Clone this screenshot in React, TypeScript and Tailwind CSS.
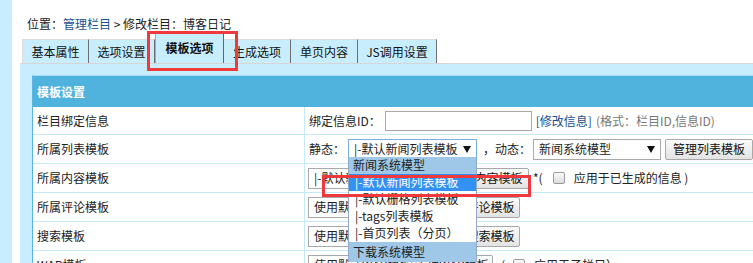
import React from "react";

const Tri = () => (
  <svg width="8" height="7" viewBox="0 0 8 7">
    <path d="M0 0H8L4 7Z" fill="#111" />
  </svg>
);

function Sel({ className = "", text, focus = false }: { className?: string; text: string; focus?: boolean }) {
  return (
    <div
      className={`h-[21px] shrink-0 flex items-center justify-between pl-[5px] pr-[5px] bg-white border overflow-hidden whitespace-nowrap ${
        focus ? "border-[#7aaee6]" : "border-[#a9a9a9]"
      } ${className}`}
    >
      <span>{text}</span>
      <Tri />
    </div>
  );
}

function Btn({ className = "", children }: { className?: string; children: React.ReactNode }) {
  return (
    <div
      className={`h-[21px] shrink-0 flex items-center justify-center border border-[#a9a9a9] rounded-[2px] bg-gradient-to-b from-[#fbfbfb] to-[#e3e3e3] text-[#111] whitespace-nowrap ${className}`}
    >
      {children}
    </div>
  );
}

const Check = () => (
  <span className="inline-block w-[12px] h-[12px] border border-[#9a9a9a] rounded-[2px] bg-gradient-to-b from-[#fafafa] to-[#dcdcdc]" />
);

function Row({ label, h = "h-[29px]", children }: { label: string; h?: string; children?: React.ReactNode }) {
  return (
    <div className={`flex ${h} border-b border-[#c6e9f8] bg-white`}>
      <div className="w-[272px] shrink-0 border-r border-[#c6e9f8] pl-[4px] flex items-center text-[#222]">{label}</div>
      <div className="flex items-center pl-[3px] whitespace-nowrap">{children}</div>
    </div>
  );
}

const tabs = ["基本属性", "选项设置", "模板选项", "生成选项", "单页内容", "JS调用设置"];
const tabW = ["w-[67px]", "w-[66px]", "w-[69px]", "w-[67px]", "w-[67px]", "w-[79px]"];

export default function App() {
  return (
    <div className="relative w-[753px] h-[263px] overflow-hidden bg-white flex text-[12px] text-[#222] font-['Noto_Sans_CJK_SC',sans-serif]">
      <div className="w-[12px] shrink-0 bg-[#c8eefd]" />
      <div className="w-[8px] shrink-0" />
      <div className="flex-1 flex flex-col min-w-0">
        {/* breadcrumb */}
        <div className="h-[33px] pl-[7px] pt-[15px] leading-[18px] whitespace-nowrap">
          位置：<span className="text-[#1b4f8e]">管理栏目</span> &gt; 修改栏目：博客日记
        </div>

        {/* tabs */}
        <div className="h-[30px] flex items-end pl-[2px]">
          {tabs.map((t, i) =>
            i === 2 ? (
              <div
                key={t}
                className={`${tabW[i]} h-[30px] shrink-0 bg-[#c8eefd] border-l border-[#aaa] border-r border-r-[#666] flex items-center justify-center pb-[1px] font-bold text-[#111]`}
              >
                {t}
              </div>
            ) : (
              <div
                key={t}
                className={`${tabW[i]} h-[24px] shrink-0 bg-[#c8eefd] border-t border-t-[#dcdcdc] border-r border-r-[#6f6f6f] ${
                  i === 0 ? "border-l border-l-[#dcdcdc]" : ""
                } flex items-center justify-center pt-[1px] text-[#111]`}
              >
                {t}
              </div>
            )
          )}
        </div>

        {/* panel */}
        <div className="flex-1 bg-[#c8eefd] border-t border-[#d6d6d6] pl-[12px] pt-[11px] overflow-hidden">
          <div className="w-[760px] border-l border-[#5ab5df] border-t border-t-[#a8dcf0]">
            <div className="h-[31px] bg-[#4fb3de] pl-[4px] flex items-center text-white font-bold">模板设置</div>

            <Row label="栏目绑定信息" h="h-[28px]">
              <span className="pl-[1px]">绑定信息ID：</span>
              <div className="ml-[4px] w-[147px] h-[20px] border border-[#a9a9a9] bg-white" />
              <span className="ml-[4px] text-[#1b4f8e]">[修改信息]</span>
              <span className="ml-[4px] text-[#777]">(格式：栏目ID,信息ID)</span>
            </Row>

            <Row label="所属列表模板">
              <span className="pl-[1px]">静态：</span>
              <div className="relative ml-[3px]">
                <Sel className="w-[129px]" text="|-默认新闻列表模板" focus />
                <div className="absolute left-0 top-[18px] w-[129px] z-10 bg-white border-x border-[#8fa9c8] flex flex-col">
                  <div className="h-[17px] bg-[#9fc7e7] pl-[4px] flex items-center">新闻系统模型</div>
                  <div className="h-[17px] bg-[#3391f3] text-white pl-[6px] flex items-center">|-默认新闻列表模板</div>
                  <div className="h-[17px] pl-[6px] flex items-center">|-默认栅格列表模板</div>
                  <div className="h-[17px] pl-[6px] flex items-center">|-tags列表模板</div>
                  <div className="h-[17px] pl-[6px] flex items-center">|-首页列表（分页）</div>
                  <div className="h-[20px] bg-[#9fc7e7] pl-[4px] flex items-center">下载系统模型</div>
                </div>
              </div>
              <span className="ml-[6px]">，动态：</span>
              <Sel className="ml-[2px] w-[128px]" text="新闻系统模型" />
              <Btn className="ml-[4px] w-[88px]">管理列表模板</Btn>
            </Row>

            <Row label="所属内容模板">
              <Sel className="w-[133px]" text="|-默认新闻内容模板" />
              <Btn className="ml-[3px] w-[85px]">管理内容模板</Btn>
              <span className="ml-[4px]">*(</span>
              <span className="ml-[10px] flex items-center"><Check /></span>
              <span className="ml-[9px]">应用于已生成的信息 )</span>
            </Row>

            <Row label="所属评论模板">
              <Sel className="w-[126px]" text="使用默认评论模板" />
              <Btn className="ml-[3px] w-[83px]">管理评论模板</Btn>
            </Row>

            <Row label="搜索模板">
              <Sel className="w-[126px]" text="使用默认搜索模板" />
              <Btn className="ml-[3px] w-[83px]">管理搜索模板</Btn>
            </Row>

            <Row label="WAP模板">
              <Sel className="w-[100px]" text="使用默认WAP模板" />
              <Btn className="ml-[3px] w-[82px]">管理WAP模板</Btn>
              <span className="ml-[8px]">(</span>
              <span className="ml-[8px] flex items-center"><Check /></span>
              <span className="ml-[9px]">应用于子栏目）</span>
            </Row>
          </div>
        </div>
      </div>

      {/* annotation boxes */}
      <div className="absolute left-[147px] top-[31px] w-[91px] h-[40px] border-[3px] border-[#f0393c] z-20" />
      <div className="absolute left-[322px] top-[175px] w-[209px] h-[22px] border-[3px] border-[#f0393c] z-20" />
    </div>
  );
}
